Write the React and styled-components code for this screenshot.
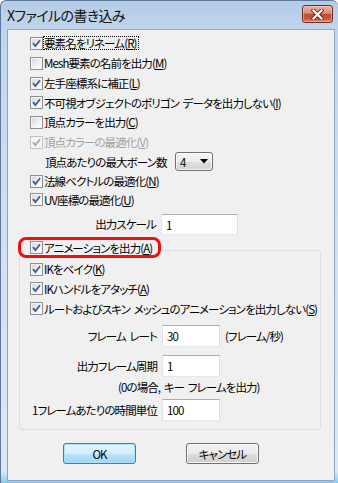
import React from "react";
import styled, { createGlobalStyle } from "styled-components";

const GlobalStyle = createGlobalStyle`
  html, body {
    margin: 0;
    padding: 0;
    background: #ffffff;
  }
  body {
    font-family: "Noto Sans CJK JP", "Noto Sans", sans-serif;
    font-size: 11.5px;
    letter-spacing: -0.9px;
    word-spacing: 2px;
    font-feature-settings: "palt";
    color: #000;
  }
`;

const Window = styled.div`
  width: 338px;
  height: 483px;
  box-sizing: border-box;
  border-top: 1px solid #5d7798;
  border-left: 1px solid #5d7798;
  border-radius: 6px 6px 0 0;
  background: linear-gradient(to bottom, #b5cbe6 0px, #c1d5ed 30px, #d0e1f3 240px, #dbe9f6 470px, #8fd0ef 481px, #4fa7d8 483px);
  display: flex;
  flex-direction: column;
  overflow: hidden;
`;

const TitleBar = styled.div`
  height: 28px;
  display: flex;
  align-items: flex-start;
  justify-content: space-between;
  padding-left: 6px;
`;

const Title = styled.span`
  font-size: 14px;
  letter-spacing: -0.6px;
  line-height: 28px;
  color: #101010;
  white-space: nowrap;
`;

const CloseButton = styled.div`
  width: 31px;
  height: 18px;
  box-sizing: border-box;
  margin: 4px 5px 0 0;
  border: 1px solid #6b2a22;
  border-radius: 3px;
  background: linear-gradient(to bottom, #eab0a3 0%, #dc8e7f 45%, #c4492f 52%, #c95a41 80%, #dd8a6c 100%);
  box-shadow: inset 0 0 0 1px rgba(255, 220, 210, 0.45);
  display: flex;
  align-items: center;
  justify-content: center;
`;

const Client = styled.div`
  margin: 0 3px 2px 6px;
  height: 450px;
  border: 1px solid #8ea6c3;
  background: #f0f0f0;
  display: flex;
  flex-direction: column;
  padding-top: 3px;
  box-sizing: content-box;
`;

const Row = styled.div`
  display: flex;
  align-items: center;
  flex: none;
  height: ${(p) => p.$h}px;
  margin-top: ${(p) => p.$mt || 0}px;
  padding-left: ${(p) => (p.$indent === undefined ? 22 : p.$indent)}px;
`;

const Box = styled.span`
  flex: none;
  width: 13px;
  height: 13px;
  box-sizing: border-box;
  border: 1px solid ${(p) => (p.$disabled ? "#c2c2c2" : "#8e8f8f")};
  background: ${(p) =>
    p.$disabled
      ? "#f4f4f4"
      : "linear-gradient(135deg, #d3d5d8 0%, #eef0f2 55%, #ffffff 100%)"};
  box-shadow: inset 0 0 0 1px #f6f6f6;
  display: flex;
  align-items: center;
  justify-content: center;
`;

const Label = styled.span`
  line-height: 12px;
  padding: 0 1px 0 0;
  border: 1px dotted ${(p) => (p.$focus ? "#000" : "transparent")};
  color: ${(p) => (p.$disabled ? "#a0a0a0" : "#000")};
  white-space: nowrap;

  u {
    text-decoration-thickness: 1px;
    text-underline-offset: 1px;
  }
`;

const PlainLabel = styled.span`
  line-height: 14px;
  white-space: nowrap;
  width: ${(p) => (p.$w ? `${p.$w}px` : "auto")};
  text-align: ${(p) => (p.$right ? "right" : "left")};
  flex: none;
`;

const Combo = styled.div`
  width: 38px;
  height: 19px;
  box-sizing: border-box;
  border: 1px solid #707070;
  border-radius: 3px;
  background: linear-gradient(to bottom, #f4f4f4 0%, #ececec 50%, #e0e0e0 51%, #d2d2d2 100%);
  box-shadow: inset 0 0 0 1px rgba(255, 255, 255, 0.7);
  display: flex;
  align-items: center;
  justify-content: space-between;
  padding: 0 4px 0 4px;
  line-height: 14px;
`;

const TextBox = styled.div`
  width: ${(p) => p.$w}px;
  height: ${(p) => p.$h || 22}px;
  box-sizing: border-box;
  flex: none;
  background: #fff;
  border: 1px solid #dbdfe6;
  border-top-color: #abadb3;
  border-bottom-color: #e3e9ef;
  border-left-color: #e2e3ea;
  padding-left: 4px;
  display: flex;
  align-items: center;
  line-height: 14px;
`;

const Group = styled.div`
  margin: 13px 0 0 11px;
  width: 302px;
  box-sizing: border-box;
  border: 1px solid #d5dfe5;
  border-radius: 3px;
  display: flex;
  flex-direction: column;
  padding-bottom: 8px;
`;

const GroupHeader = styled.div`
  align-self: flex-start;
  margin: -14px 0 0 -2px;
  height: 21px;
  box-sizing: border-box;
  border: 3px solid #ee1111;
  border-radius: 8px;
  background: #f0f0f0;
  display: flex;
  align-items: center;
  padding: 0 4px 0 9px;
`;

const ButtonRow = styled.div`
  display: flex;
  gap: 50px;
  padding-left: 55px;
  margin-top: 13px;
`;

const Button = styled.div`
  width: 73px;
  height: 21px;
  box-sizing: border-box;
  border: 1px solid ${(p) => (p.$primary ? "#3c7fb1" : "#707070")};
  border-radius: 3px;
  background: ${(p) =>
    p.$primary
      ? "linear-gradient(to bottom, #e5f4fc 0%, #d4eefb 50%, #b9e3fa 51%, #a2d6f3 100%)"
      : "linear-gradient(to bottom, #f2f2f2 0%, #ebebeb 50%, #dddddd 51%, #cfcfcf 100%)"};
  box-shadow: inset 0 0 0 1px ${(p) => (p.$primary ? "#a8e2fb" : "rgba(255,255,255,0.8)")};
  display: flex;
  align-items: center;
  justify-content: center;
  line-height: 14px;
`;

const Check = ({ color }) => (
  <svg width="9" height="9" viewBox="0 0 9 9">
    <path d="M1 4.2 L3.4 7 L8 1.2" fill="none" stroke={color} strokeWidth="1.8" />
  </svg>
);

const CheckBox = ({ checked, disabled }) => (
  <Box $disabled={disabled}>
    {checked && <Check color={disabled ? "#a8a8a8" : "#3f5b94"} />}
  </Box>
);

const Mn = ({ k }) => (
  <>
    (<u>{k}</u>)
  </>
);

const CheckRow = ({ text, k, checked, disabled, focus, h, mt, indent }) => (
  <Row $h={h} $mt={mt} $indent={indent}>
    <CheckBox checked={checked} disabled={disabled} />
    <Label $focus={focus} $disabled={disabled}>
      {text}
      <Mn k={k} />
    </Label>
  </Row>
);

const CloseIcon = () => (
  <svg width="13" height="11" viewBox="0 0 13 11">
    <path d="M2.5 1.5 L10.5 9.5 M10.5 1.5 L2.5 9.5" stroke="#5a2820" strokeWidth="4" strokeLinecap="square" />
    <path d="M2.5 1.5 L10.5 9.5 M10.5 1.5 L2.5 9.5" stroke="#ffffff" strokeWidth="2.2" strokeLinecap="square" />
  </svg>
);

const Arrow = () => (
  <svg width="8" height="5" viewBox="0 0 8 5">
    <path d="M0 0 H8 L4 4.5 Z" fill="#000" />
  </svg>
);

export default function App() {
  return (
    <>
      <GlobalStyle />
      <Window>
        <TitleBar>
          <Title>Xファイルの書き込み</Title>
          <CloseButton>
            <CloseIcon />
          </CloseButton>
        </TitleBar>
        <Client>
          <CheckRow h={20} text="要素名をリネーム" k="R" checked focus />
          <CheckRow h={20} text="Mesh要素の名前を出力" k="M" />
          <CheckRow h={20} text="左手座標系に補正" k="L" checked />
          <CheckRow h={19} text="不可視オブジェクトのポリゴン データを出力しない" k="I" checked />
          <CheckRow h={20} text="頂点カラーを出力" k="C" />
          <CheckRow h={20} text="頂点カラーの最適化" k="V" checked disabled />
          <Row $h={19} $indent={37}>
            <PlainLabel $w={130}>頂点あたりの最大ボーン数</PlainLabel>
            <Combo>
              <span>4</span>
              <Arrow />
            </Combo>
          </Row>
          <CheckRow h={20} text="法線ベクトルの最適化" k="N" checked />
          <CheckRow h={17} text="UV座標の最適化" k="U" checked />
          <Row $h={29} $indent={0} style={{ alignItems: "flex-start" }}>
            <PlainLabel $w={148} $right style={{ marginTop: 9 }}>
              出力スケール
            </PlainLabel>
            <TextBox $w={77} $h={21} style={{ marginTop: 6, marginLeft: 5 }}>
              1
            </TextBox>
          </Row>
          <Group>
            <GroupHeader>
              <CheckBox checked />
              <Label>
                アニメーションを出力
                <Mn k="A" />
              </Label>
            </GroupHeader>
            <CheckRow h={20} mt={1} indent={10} text="IKをベイク" k="K" checked />
            <CheckRow h={19} indent={10} text="IKハンドルをアタッチ" k="A" checked />
            <CheckRow h={21} indent={10} text="ルートおよびスキン メッシュのアニメーションを出力しない" k="S" checked />
            <Row $h={22} $mt={6} $indent={0}>
              <PlainLabel $w={137} $right>フレーム レート</PlainLabel>
              <TextBox $w={58} style={{ marginLeft: 5 }}>30</TextBox>
              <PlainLabel style={{ marginLeft: 5 }}>(フレーム/秒)</PlainLabel>
            </Row>
            <Row $h={22} $mt={8} $indent={0}>
              <PlainLabel $w={137} $right>出力フレーム周期</PlainLabel>
              <TextBox $w={58} style={{ marginLeft: 5 }}>1</TextBox>
            </Row>
            <Row $h={16} $mt={2} $indent={98}>
              <PlainLabel>(0の場合, キー フレームを出力)</PlainLabel>
            </Row>
            <Row $h={22} $mt={4} $indent={0}>
              <PlainLabel $w={137} $right>1フレームあたりの時間単位</PlainLabel>
              <TextBox $w={58} style={{ marginLeft: 5 }}>100</TextBox>
            </Row>
          </Group>
          <ButtonRow>
            <Button $primary>OK</Button>
            <Button>キャンセル</Button>
          </ButtonRow>
        </Client>
      </Window>
    </>
  );
}
